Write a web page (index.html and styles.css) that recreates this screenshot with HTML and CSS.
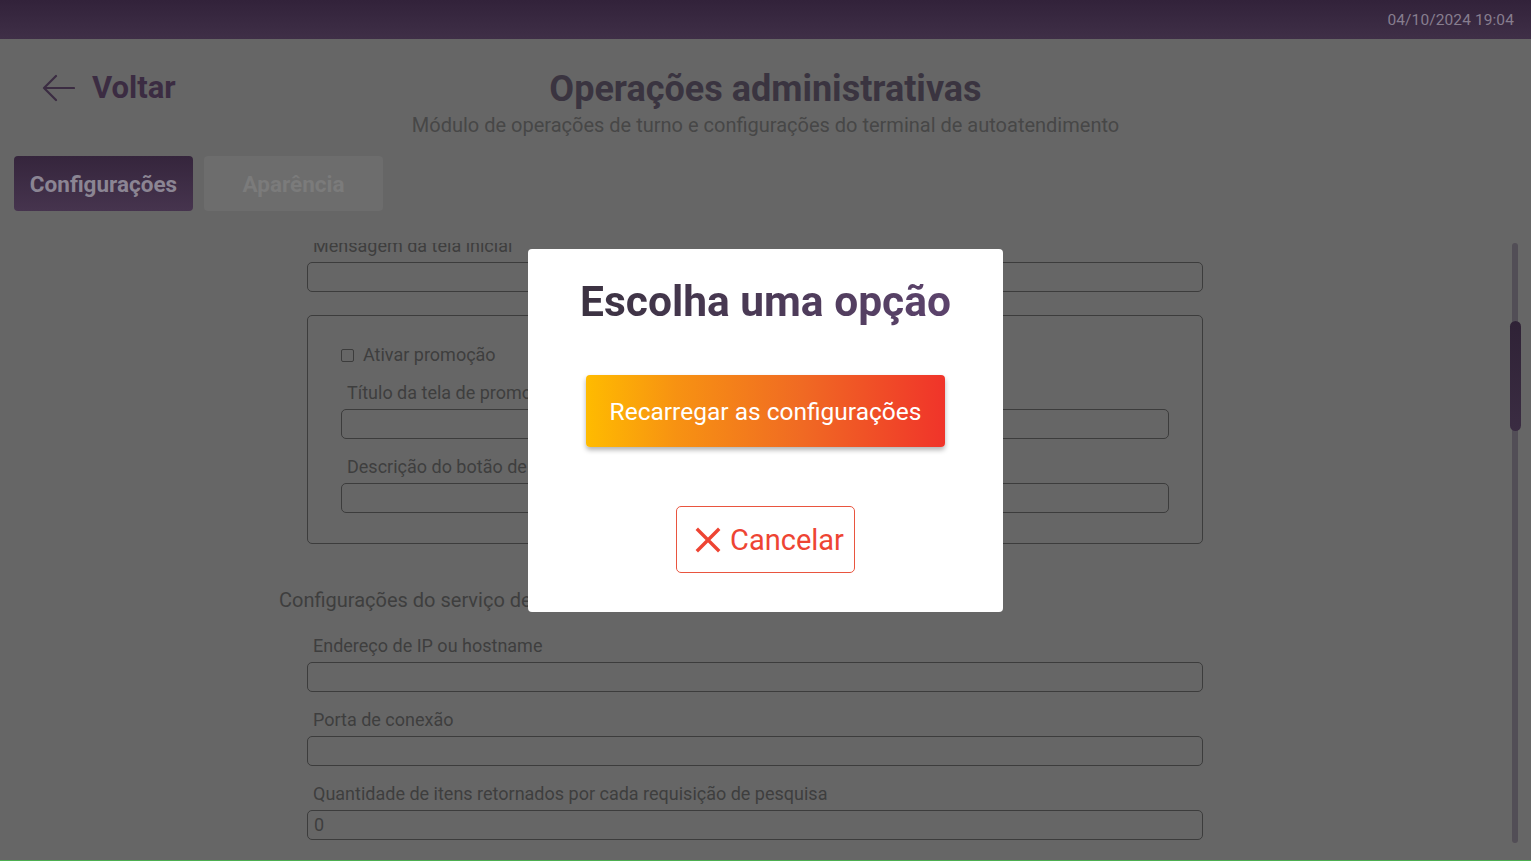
FILE: index.html
```html
<!DOCTYPE html>
<html lang="pt-BR">
<head>
<meta charset="utf-8">
<title>Operações administrativas</title>
<link rel="stylesheet" href="styles.css">
</head>
<body>
<div class="app">
  <header class="topbar">
    <span class="clock">04/10/2024 19:04</span>
  </header>

  <div class="page-head">
    <a class="back">
      <svg class="back-icon" viewBox="0 0 34 30" width="34" height="30">
        <path d="M33 15H3M15 3L3 15l12 12" fill="none" stroke="currentColor" stroke-width="2.2" stroke-linecap="round" stroke-linejoin="round"/>
      </svg>
      <span>Voltar</span>
    </a>
    <div class="titles">
      <h1 class="title">Operações administrativas</h1>
      <p class="subtitle">Módulo de operações de turno e configurações do terminal de autoatendimento</p>
    </div>
    <div></div>
  </div>

  <nav class="tabs">
    <button class="tab active">Configurações</button>
    <button class="tab">Aparência</button>
  </nav>

  <div class="scroll-area">
    <div class="scroll-content">
      <div class="section">
        <div class="field">
          <label class="label">Mensagem da tela inicial</label>
          <div class="input"></div>
        </div>

        <div class="group">
          <label class="check-row"><span class="checkbox"></span>Ativar promoção</label>
          <div class="field">
            <label class="label">Título da tela de promoção</label>
            <div class="input"></div>
          </div>
          <div class="field">
            <label class="label">Descrição do botão de promoção</label>
            <div class="input"></div>
          </div>
        </div>
      </div>

      <h2 class="section-title">Configurações do serviço de pesquisa</h2>
      <div class="section">
        <div class="field">
          <label class="label">Endereço de IP ou hostname</label>
          <div class="input"></div>
        </div>
        <div class="field">
          <label class="label">Porta de conexão</label>
          <div class="input"></div>
        </div>
        <div class="field">
          <label class="label">Quantidade de itens retornados por cada requisição de pesquisa</label>
          <div class="input">0</div>
        </div>
      </div>
    </div>
    <div class="scrollbar"><div class="thumb"></div></div>
  </div>
  <div class="bottom-line"></div>
</div>

<div class="modal">
  <h2 class="modal-title">Escolha uma opção</h2>
  <button class="btn-reload">Recarregar as configurações</button>
  <button class="btn-cancel">
    <svg viewBox="0 0 26 26" width="26" height="26"><path d="M3 3L23 23M23 3L3 23" stroke="currentColor" stroke-width="3.4" stroke-linecap="square"/></svg>
    <span>Cancelar</span>
  </button>
</div>
</body>
</html>
```

FILE: styles.css
```css
* { box-sizing: border-box; }
html, body { margin: 0; padding: 0; }
body {
  width: 1531px;
  height: 861px;
  overflow: hidden;
  background: #666666;
  font-family: Roboto, "Noto Sans", sans-serif;
  position: relative;
}
.app {
  height: 861px;
  display: flex;
  flex-direction: column;
}
.topbar {
  height: 39px;
  flex: none;
  background: linear-gradient(#32223a, #3f2f47);
  display: flex;
  align-items: center;
  justify-content: flex-end;
  padding-right: 17px;
}
.clock {
  color: #877e8f;
  font-size: 15.5px;
  letter-spacing: 0.1px;
}
.page-head {
  display: grid;
  grid-template-columns: 1fr auto 1fr;
  padding-top: 29px;
  height: 117px;
  flex: none;
}
.back {
  display: flex;
  align-items: center;
  gap: 17px;
  color: #3b2c42;
  padding-left: 41px;
  height: 40px;
  align-self: start;
}
.back-icon { flex: none; }
.back span {
  font-size: 31px;
  font-weight: 700;
  line-height: 40px;
}
.titles { text-align: center; }
.title {
  margin: 0;
  font-size: 36px;
  line-height: 42px;
  font-weight: 700;
  color: #3a3440;
}
.subtitle {
  margin: 4px 0 0;
  font-size: 20px;
  line-height: 22px;
  color: #474747;
}
.tabs {
  display: flex;
  gap: 11px;
  padding-left: 14px;
  height: 55px;
  flex: none;
}
.tab {
  width: 179px;
  height: 55px;
  border: none;
  border-radius: 4px;
  font-family: inherit;
  font-size: 22.5px;
  font-weight: 700;
  background: #6d6d6d;
  color: #7b7b7b;
  padding: 0;
}
.tab.active {
  background: linear-gradient(#35253c, #46344e);
  color: #8b8593;
}
.scroll-area {
  margin-top: 32px;
  height: 600px;
  flex: none;
  position: relative;
  overflow: hidden;
}
.scroll-content {
  margin-top: -7px;
  padding-left: 279px;
  width: 1203px;
}
.section {
  padding-left: 28px;
}
.field {
  display: flex;
  flex-direction: column;
  gap: 6px;
  margin-bottom: 18px;
}
.label {
  font-size: 18px;
  line-height: 20px;
  color: #3e3e3e;
  padding-left: 6px;
  white-space: nowrap;
}
.input {
  height: 30px;
  border: 1.5px solid #3c3c3c;
  border-radius: 5px;
  font-size: 18px;
  line-height: 27px;
  color: #3e3e3e;
  padding-left: 6px;
}
.group {
  margin-top: 23px;
  border: 1.5px solid #3c3c3c;
  border-radius: 5px;
  padding: 28px 33px 12px 33px;
}
.check-row {
  display: flex;
  align-items: center;
  gap: 9px;
  font-size: 18px;
  line-height: 22px;
  color: #3e3e3e;
  margin-bottom: 17px;
}
.checkbox {
  width: 13px;
  height: 13px;
  border: 1.5px solid #3c3c3c;
  border-radius: 2px;
  flex: none;
}
.section-title {
  margin: 45px 0 25px;
  font-size: 20px;
  line-height: 22px;
  font-weight: 400;
  color: #3e3e3e;
}
.scrollbar {
  position: absolute;
  right: 13px;
  top: 0;
  width: 6px;
  height: 600px;
  border-radius: 3px;
  background: #524e56;
}
.thumb {
  position: absolute;
  left: -2px;
  top: 78px;
  width: 11px;
  height: 110px;
  border-radius: 6px;
  background: linear-gradient(#2f2236, #3a2c42);
}
.bottom-line {
  margin-top: auto;
  height: 1px;
  background: #4caf50;
}
.modal {
  position: absolute;
  left: 528px;
  top: 249px;
  width: 475px;
  height: 363px;
  background: #ffffff;
  border-radius: 4px;
  display: flex;
  flex-direction: column;
  align-items: center;
}
.modal-title {
  margin: 28px 0 0;
  font-size: 42.5px;
  line-height: 50px;
  font-weight: 700;
  background: linear-gradient(90deg, #3b3241, #5c436c);
  -webkit-background-clip: text;
  background-clip: text;
  color: transparent;
}
.btn-reload {
  margin-top: 48px;
  width: 359px;
  height: 72px;
  border: none;
  border-radius: 4px;
  background: linear-gradient(90deg, #ffbb00 0%, #f79212 25%, #f06a23 60%, #f0342a 100%);
  box-shadow: 0 3px 5px rgba(0, 0, 0, 0.3);
  color: #ffffff;
  font-family: inherit;
  font-size: 24.5px;
  padding: 0;
}
.btn-cancel {
  margin-top: 59px;
  width: 179px;
  height: 67px;
  border: 1px solid #e9553f;
  border-radius: 5px;
  background: #ffffff;
  color: #ee4433;
  display: flex;
  align-items: center;
  justify-content: center;
  gap: 9px;
  font-family: inherit;
  font-size: 29px;
  padding: 0 0 0 8px;
}
```
